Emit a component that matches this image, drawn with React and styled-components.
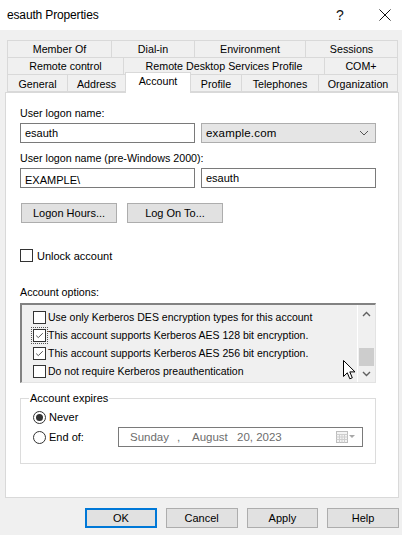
import styled, { createGlobalStyle } from 'styled-components';

const GlobalStyle = createGlobalStyle`
  html, body {
    margin: 0;
    padding: 0;
  }
  body {
    font-family: "Liberation Sans", Arial, sans-serif;
    font-size: 10.7px;
    color: #000;
  }
`;

const tabRows = [
  [
    { label: 'Member Of', width: 105 },
    { label: 'Dial-in', width: 84 },
    { label: 'Environment', width: 112 },
    { label: 'Sessions', width: 93 },
  ],
  [
    { label: 'Remote control', width: 117 },
    { label: 'Remote Desktop Services Profile', width: 202 },
    { label: 'COM+', width: 74 },
  ],
  [
    { label: 'General', width: 61 },
    { label: 'Address', width: 59 },
    { label: 'Account', width: 66, active: true },
    { label: 'Profile', width: 52 },
    { label: 'Telephones', width: 78 },
    { label: 'Organization', width: 80 },
  ],
];

const accountOptions = [
  { label: 'Use only Kerberos DES encryption types for this account', checked: false },
  { label: 'This account supports Kerberos AES 128 bit encryption.', checked: true, focus: true },
  { label: 'This account supports Kerberos AES 256 bit encryption.', checked: true },
  { label: 'Do not require Kerberos preauthentication', checked: false },
];

const Check = ({ checked, focus }) => (
  <CheckBox $focus={focus}>
    {checked && (
      <svg width="11" height="11" viewBox="0 0 11 11">
        <path d="M2.2 5.6 L4.3 7.6 L8.8 3.2" fill="none" stroke="#555" strokeWidth="1" />
      </svg>
    )}
  </CheckBox>
);

const Chevron = ({ up }) => (
  <svg width="9" height="6" viewBox="0 0 9 6">
    <path
      d={up ? 'M1 5 L4.5 1.5 L8 5' : 'M1 1 L4.5 4.5 L8 1'}
      fill="none"
      stroke="#606060"
      strokeWidth="1.4"
    />
  </svg>
);

const App = () => {
  return (
    <>
      <GlobalStyle />
      <Window>
        <TitleBar>
          <TitleText>esauth Properties</TitleText>
          <HelpGlyph>?</HelpGlyph>
          <CloseIcon>
            <svg width="12" height="12" viewBox="0 0 12 12">
              <path d="M0.5 0.5 L11.5 11.5 M11.5 0.5 L0.5 11.5" stroke="#111" strokeWidth="1" />
            </svg>
          </CloseIcon>
        </TitleBar>

        <Body>
          <TabStrip>
            {tabRows.map((row, i) => (
              <TabRow key={i} $tall={i === 2}>
                {row.map((t) => (
                  <Tab key={t.label} $width={t.width} $active={t.active} $front={i === 2}>
                    {t.label}
                  </Tab>
                ))}
              </TabRow>
            ))}
          </TabStrip>

          <Panel>
            <Label>User logon name:</Label>
            <FieldRow>
              <TextInput>esauth</TextInput>
              <Select>
                <span>example.com</span>
                <svg width="10" height="6" viewBox="0 0 10 6">
                  <path d="M1 1 L5 5 L9 1" fill="none" stroke="#555" strokeWidth="1" />
                </svg>
              </Select>
            </FieldRow>

            <Label $top={8}>User logon name (pre-Windows 2000):</Label>
            <FieldRow>
              <TextInput $low>EXAMPLE\</TextInput>
              <TextInput>esauth</TextInput>
            </FieldRow>

            <ButtonRow>
              <Button $width={96}>Logon Hours...</Button>
              <Button $width={96}>Log On To...</Button>
            </ButtonRow>

            <CheckRow>
              <Check />
              <span>Unlock account</span>
            </CheckRow>

            <Label $top={22}>Account options:</Label>
            <ListBox>
              <ListItems>
                {accountOptions.map((o) => (
                  <ListItem key={o.label}>
                    <Check checked={o.checked} focus={o.focus} />
                    <span>{o.label}</span>
                  </ListItem>
                ))}
              </ListItems>
              <ScrollBar>
                <ScrollArrow>
                  <Chevron up />
                </ScrollArrow>
                <ScrollTrack>
                  <ScrollThumb />
                </ScrollTrack>
                <ScrollArrow $down>
                  <Chevron />
                </ScrollArrow>
              </ScrollBar>
              <Cursor>
                <svg width="14" height="21" viewBox="0 0 14 21">
                  <path
                    d="M0.5 0.5 L0.5 16.5 L4.3 12.8 L6.8 18.8 L9.3 17.8 L6.8 11.9 L12 11.9 Z"
                    fill="#fff"
                    stroke="#000"
                    strokeWidth="1"
                    strokeLinejoin="miter"
                  />
                </svg>
              </Cursor>
            </ListBox>

            <Group>
              <Legend>Account expires</Legend>
              <RadioRow>
                <Radio $checked />
                <span>Never</span>
              </RadioRow>
              <RadioRow>
                <Radio />
                <span>End of:</span>
                <DatePicker>
                  <DatePart $width={47}>Sunday</DatePart>
                  <DatePart $width={15}>,</DatePart>
                  <DatePart $width={45}>August</DatePart>
                  <DatePart>20, 2023</DatePart>
                  <CalendarIcon>
                    <svg width="20" height="12" viewBox="0 0 20 12">
                      <rect x="0.5" y="0.5" width="11" height="11" fill="#f4f4f4" stroke="#bdbdbd" />
                      <path
                        d="M0.5 3.5 H11.5 M0.5 6 H11.5 M0.5 8.5 H11.5 M3.5 3.5 V11.5 M6 3.5 V11.5 M8.5 3.5 V11.5"
                        stroke="#cfcfcf"
                        strokeWidth="1"
                      />
                      <path d="M13 4 L19 4 L16 7 Z" fill="#a8a8a8" />
                    </svg>
                  </CalendarIcon>
                </DatePicker>
              </RadioRow>
            </Group>
          </Panel>

          <Footer>
            <Button $width={73} $default>OK</Button>
            <Button $width={73}>Cancel</Button>
            <Button $width={73}>Apply</Button>
            <Button $width={73}>Help</Button>
          </Footer>
        </Body>
      </Window>
    </>
  );
};

export default App;

const Window = styled.div`
  width: 402px;
  height: 535px;
  background: #f0f0f0;
  display: flex;
  flex-direction: column;
  overflow: hidden;
`;

const TitleBar = styled.div`
  height: 30px;
  background: #fff;
  display: flex;
  align-items: center;
  padding: 0 10px 0 7px;
  box-sizing: border-box;
  flex-shrink: 0;
`;

const TitleText = styled.div`
  flex: 1;
  font-size: 12px;
  letter-spacing: -0.15px;
`;

const HelpGlyph = styled.div`
  width: 14px;
  text-align: center;
  font-size: 14px;
  margin-right: 31px;
  color: #111;
`;

const CloseIcon = styled.div`
  width: 14px;
  height: 12px;
  display: flex;
  justify-content: center;
`;

const Body = styled.div`
  flex: 1;
  display: flex;
  flex-direction: column;
  padding: 10px 3px 0 5px;
`;

const TabStrip = styled.div`
  margin-left: 2px;
  display: flex;
  flex-direction: column;
`;

const TabRow = styled.div`
  display: flex;
  height: ${(p) => (p.$tall ? 18 : 17)}px;
`;

const Tab = styled.div`
  box-sizing: border-box;
  width: ${(p) => p.$width}px;
  flex-shrink: 0;
  height: ${(p) => (p.$active ? 21 : 18)}px;
  margin-top: ${(p) => (p.$active ? -2 : 0)}px;
  margin-left: -1px;
  &:first-child {
    margin-left: 0;
  }
  position: relative;
  z-index: ${(p) => (p.$active ? 2 : 1)};
  border: 1px solid #d9d9d9;
  border-bottom: ${(p) => (p.$active ? 'none' : '1px solid #d9d9d9')};
  background: ${(p) => (p.$active ? '#fff' : '#f0f0f0')};
  display: flex;
  align-items: ${(p) => (p.$active ? 'flex-start' : 'center')};
  padding-top: ${(p) => (p.$active ? 2 : p.$front ? 2 : 0)}px;
  justify-content: center;
  white-space: nowrap;
`;

const Panel = styled.div`
  box-sizing: border-box;
  width: 394px;
  height: 406px;
  background: #fff;
  border: 1px solid #d9d9d9;
  padding: 13px 22px 0 14px;
  display: flex;
  flex-direction: column;
  position: relative;
  z-index: 1;
`;

const Label = styled.div`
  line-height: 15px;
  margin-top: ${(p) => p.$top || 0}px;
  color: #000;
`;

const FieldRow = styled.div`
  margin-top: 2px;
  display: grid;
  grid-template-columns: 175px 175px;
  column-gap: 6px;
  height: 20px;
`;

const TextInput = styled.div`
  box-sizing: border-box;
  height: 20px;
  border: 1px solid #7a7a7a;
  background: #fff;
  padding: ${(p) => (p.$low ? '4px' : '2px')} 4px 0 4px;
  line-height: 14px;
  font-size: 11px;
`;

const Select = styled.div`
  box-sizing: border-box;
  height: 20px;
  border: 1px solid #adadad;
  background: #e5e5e5;
  display: flex;
  align-items: center;
  justify-content: space-between;
  padding: 0 6px 0 4px;
  font-size: 11.5px;
  letter-spacing: 0.2px;
`;

const ButtonRow = styled.div`
  margin-top: 15px;
  margin-left: 1px;
  display: flex;
  gap: 10px;
`;

const Button = styled.div`
  box-sizing: border-box;
  width: ${(p) => p.$width}px;
  height: 20px;
  background: #e1e1e1;
  border: ${(p) => (p.$default ? '2px solid #0078d7' : '1px solid #adadad')};
  display: flex;
  align-items: center;
  justify-content: center;
  font-size: 11px;
`;

const CheckRow = styled.div`
  margin-top: 25px;
  height: 15px;
  display: flex;
  align-items: center;
  gap: 4px;
  font-size: 11px;
`;

const CheckBox = styled.span`
  box-sizing: border-box;
  width: 13px;
  height: 13px;
  border: 1px solid #333;
  background: #fff;
  display: inline-flex;
  align-items: center;
  justify-content: center;
  flex-shrink: 0;
  outline: ${(p) => (p.$focus ? '1px dotted #555' : 'none')};
  outline-offset: 1px;
`;

const ListBox = styled.div`
  margin-top: 3px;
  box-sizing: border-box;
  height: 80px;
  background: #f0f0f0;
  border-top: 2px solid #828282;
  border-left: 2px solid #828282;
  border-right: 1px solid #e3e3e3;
  border-bottom: 1px solid #e3e3e3;
  display: flex;
  position: relative;
`;

const ListItems = styled.div`
  flex: 1;
  padding: 3px 0 0 11px;
  display: flex;
  flex-direction: column;
  font-size: 10.5px;
`;

const ListItem = styled.div`
  height: 18px;
  display: flex;
  align-items: center;
  gap: 2px;
  white-space: nowrap;
`;

const ScrollBar = styled.div`
  width: 17px;
  border-left: 1px solid #fff;
  display: flex;
  flex-direction: column;
`;

const ScrollArrow = styled.div`
  height: ${(p) => (p.$down ? 16 : 17)}px;
  display: flex;
  align-items: center;
  justify-content: center;
`;

const ScrollTrack = styled.div`
  flex: 1;
  display: flex;
  flex-direction: column;
  justify-content: flex-end;
  padding: 0 1px;
`;

const ScrollThumb = styled.div`
  height: 18px;
  background: #cdcdcd;
`;

const Cursor = styled.div`
  position: absolute;
  left: 321px;
  top: 55px;
  pointer-events: none;
  line-height: 0;
`;

const Group = styled.fieldset`
  margin: 8px 0 0 0;
  padding: 1px 12px 12px 12px;
  border: 1px solid #dcdcdc;
  box-sizing: border-box;
  height: 73px;
  display: flex;
  flex-direction: column;
`;

const Legend = styled.legend`
  margin-left: -4px;
  padding: 0 1px;
  line-height: 15px;
  font-size: 11px;
`;

const RadioRow = styled.div`
  height: 20px;
  display: flex;
  align-items: center;
  gap: 3px;
  font-size: 11px;
`;

const Radio = styled.span`
  box-sizing: border-box;
  width: 13px;
  height: 13px;
  border-radius: 50%;
  border: 1px solid #333;
  background: #fff;
  display: inline-flex;
  align-items: center;
  justify-content: center;
  flex-shrink: 0;
  &::after {
    content: '';
    width: 7px;
    height: 7px;
    border-radius: 50%;
    background: ${(p) => (p.$checked ? '#333' : 'transparent')};
  }
`;

const DatePicker = styled.div`
  margin-left: auto;
  box-sizing: border-box;
  width: 245px;
  height: 20px;
  border: 1px solid #7a7a7a;
  background: #fff;
  display: flex;
  align-items: center;
  padding-left: 11px;
  color: #6d6d6d;
  font-size: 11.5px;
`;

const DatePart = styled.span`
  width: ${(p) => (p.$width ? `${p.$width}px` : 'auto')};
  flex-shrink: 0;
  white-space: nowrap;
`;

const CalendarIcon = styled.span`
  margin-left: auto;
  margin-right: 6px;
  display: flex;
  align-items: center;
`;

const Footer = styled.div`
  margin-top: 10px;
  margin-left: 80px;
  display: flex;
  gap: 9px;
`;
